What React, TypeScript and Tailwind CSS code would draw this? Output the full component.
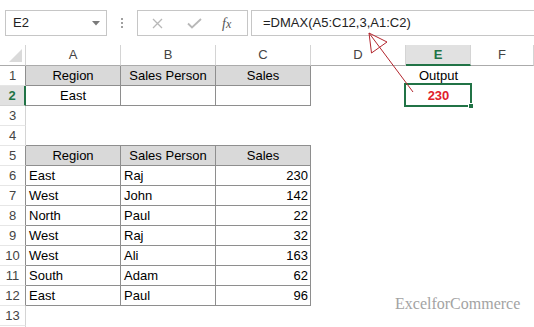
import React from "react";

type Kind = "head" | "crit" | "data" | "empty";
type Row = { n: number; kind: Kind; a?: string; b?: string; c?: string; topOfTable?: boolean };

const rows: Row[] = [
  { n: 1, kind: "head", a: "Region", b: "Sales Person", c: "Sales" },
  { n: 2, kind: "crit", a: "East", b: "", c: "" },
  { n: 3, kind: "empty" },
  { n: 4, kind: "empty", topOfTable: true },
  { n: 5, kind: "head", a: "Region", b: "Sales Person", c: "Sales" },
  { n: 6, kind: "data", a: "East", b: "Raj", c: "230" },
  { n: 7, kind: "data", a: "West", b: "John", c: "142" },
  { n: 8, kind: "data", a: "North", b: "Paul", c: "22" },
  { n: 9, kind: "data", a: "West", b: "Raj", c: "32" },
  { n: 10, kind: "data", a: "West", b: "Ali", c: "163" },
  { n: 11, kind: "data", a: "South", b: "Adam", c: "62" },
  { n: 12, kind: "data", a: "East", b: "Paul", c: "96" },
  { n: 13, kind: "empty" },
];

function RowHeader({ row }: { row: Row }) {
  const inTable = row.kind !== "empty";
  if (row.n === 2) {
    return (
      <div className="h-[20px] flex items-center justify-center bg-[#e1e1e1] border-r-2 border-r-[#217346] border-b border-b-[#d4d4d4] text-[13px] font-bold text-[#217346]">
        {row.n}
      </div>
    );
  }
  return (
    <div
      className={
        "h-[20px] flex items-center justify-center border-r border-b border-b-[#e6e6e6] text-[13px] text-[#444] " +
        (inTable ? "border-r-[#8e8e8e]" : "border-r-[#d4d4d4]")
      }
    >
      {row.n}
    </div>
  );
}

function TableCell({ row, text, align }: { row: Row; text?: string; align: "left" | "center" | "right" }) {
  if (row.kind === "empty") {
    return <div className={"h-[20px] " + (row.topOfTable ? "border-b border-b-[#8e8e8e]" : "")} />;
  }
  const bg = row.kind === "head" ? "bg-[#d9d9d9]" : "bg-white";
  const justify =
    align === "left" ? "justify-start pl-[3px]" : align === "right" ? "justify-end pr-[2px]" : "justify-center";
  return (
    <div className={"h-[20px] flex items-center border-r border-b border-[#8e8e8e] text-[13px] text-black " + bg + " " + justify}>
      {text}
    </div>
  );
}

export default function App() {
  return (
    <div
      className="relative w-[534px] h-[327px] overflow-hidden bg-white"
      style={{ fontFamily: '"Liberation Sans", Arial, sans-serif' }}
    >
      {/* Formula bar */}
      <div className="h-[45px] flex items-start pt-[10px]">
        <div className="ml-[5px] w-[102px] h-[26px] border border-[#c6c6c6] flex items-center pl-[7px] pr-[6px] justify-between">
          <span className="text-[13px] text-[#222]">E2</span>
          <svg width="8" height="5" viewBox="0 0 8 5">
            <polygon points="0,0 8,0 4,4.5" fill="#7a7a7a" />
          </svg>
        </div>
        <div className="w-[30px] h-[26px] flex flex-col items-center justify-center gap-[2px]">
          <div className="w-[2px] h-[2px] bg-[#a0a0a0]" />
          <div className="w-[2px] h-[2px] bg-[#a0a0a0]" />
          <div className="w-[2px] h-[2px] bg-[#a0a0a0]" />
        </div>
        <div className="w-[111px] h-[26px] border border-[#c6c6c6] flex items-center">
          <svg className="ml-[14px]" width="11" height="11" viewBox="0 0 11 11">
            <path d="M1 1 L10 10 M10 1 L1 10" stroke="#b8b8b8" strokeWidth="1.3" fill="none" />
          </svg>
          <svg className="ml-[24px]" width="15" height="11" viewBox="0 0 15 11">
            <path d="M1 5.5 L5 9.5 L14 1" stroke="#b8b8b8" strokeWidth="1.8" fill="none" />
          </svg>
          <span
            className="ml-[20px] text-[14px] italic text-[#555]"
            style={{ fontFamily: '"Liberation Serif", "Times New Roman", serif' }}
          >
            f<span className="text-[12px]">x</span>
          </span>
        </div>
        <div className="ml-[3px] flex-1 h-[26px] border-t border-b border-l border-[#c6c6c6] flex items-center pl-[11px]">
          <span className="text-[13px] text-[#222]">=DMAX(A5:C12,3,A1:C2)</span>
        </div>
      </div>

      {/* Sheet grid */}
      <div className="grid grid-cols-[26px_95px_95px_95px_95px_65px_63px]">
        {/* column headers */}
        <div className="h-[21px] border-r border-b border-r-[#d4d4d4] border-b-[#ababab] flex items-end justify-end pr-[3px] pb-[3px]">
          <svg width="13" height="13" viewBox="0 0 13 13">
            <polygon points="0,13 13,13 13,0" fill="#dadada" />
          </svg>
        </div>
        {["A", "B", "C", "D"].map((l) => (
          <div
            key={l}
            className="h-[21px] border-r border-b border-r-[#d4d4d4] border-b-[#ababab] flex items-center justify-center text-[13px] text-[#444]"
          >
            {l}
          </div>
        ))}
        <div className="h-[21px] border-r border-r-[#d4d4d4] border-b-2 border-b-[#217346] bg-[#e1e1e1] flex items-center justify-center text-[13px] font-bold text-[#217346]">
          E
        </div>
        <div className="h-[21px] border-r border-b border-r-[#d4d4d4] border-b-[#ababab] flex items-center justify-center text-[13px] text-[#444]">
          F
        </div>

        {rows.map((row) => (
          <React.Fragment key={row.n}>
            <RowHeader row={row} />
            <TableCell row={row} text={row.a} align={row.kind === "data" ? "left" : "center"} />
            <TableCell row={row} text={row.b} align={row.kind === "data" ? "left" : "center"} />
            <TableCell row={row} text={row.c} align={row.kind === "data" ? "right" : "center"} />
            <div className="h-[20px]" />
            <div className="relative h-[20px] flex items-center justify-center text-[13px]">
              {row.n === 1 && <span className="text-black">Output</span>}
              {row.n === 2 && (
                <>
                  <span className="font-bold text-[#e0202c]">230</span>
                  <div className="absolute left-[-2px] top-[-3px] right-[-1px] bottom-[-1px] border-2 border-[#217346]" />
                  <div className="absolute right-[-3px] bottom-[-3px] w-[6px] h-[6px] bg-[#217346] border border-white" />
                </>
              )}
            </div>
            <div className="h-[20px]" />
          </React.Fragment>
        ))}
        <div className="h-[20px] border-r border-r-[#d4d4d4]" />
      </div>

      {/* Arrow annotation */}
      <svg className="absolute left-0 top-0 pointer-events-none" width="534" height="327" viewBox="0 0 534 327">
        <line x1="413" y1="92" x2="369" y2="33" stroke="#b3262e" strokeWidth="1" />
        <polygon points="369,33 371.5,53 387,42" fill="none" stroke="#b3262e" strokeWidth="1" />
      </svg>

      {/* Watermark */}
      <div
        className="absolute left-[395px] top-[292px] text-[16px] text-[#a3a3a3]"
        style={{ fontFamily: '"Liberation Serif", "Times New Roman", serif' }}
      >
        ExcelforCommerce
      </div>
    </div>
  );
}
